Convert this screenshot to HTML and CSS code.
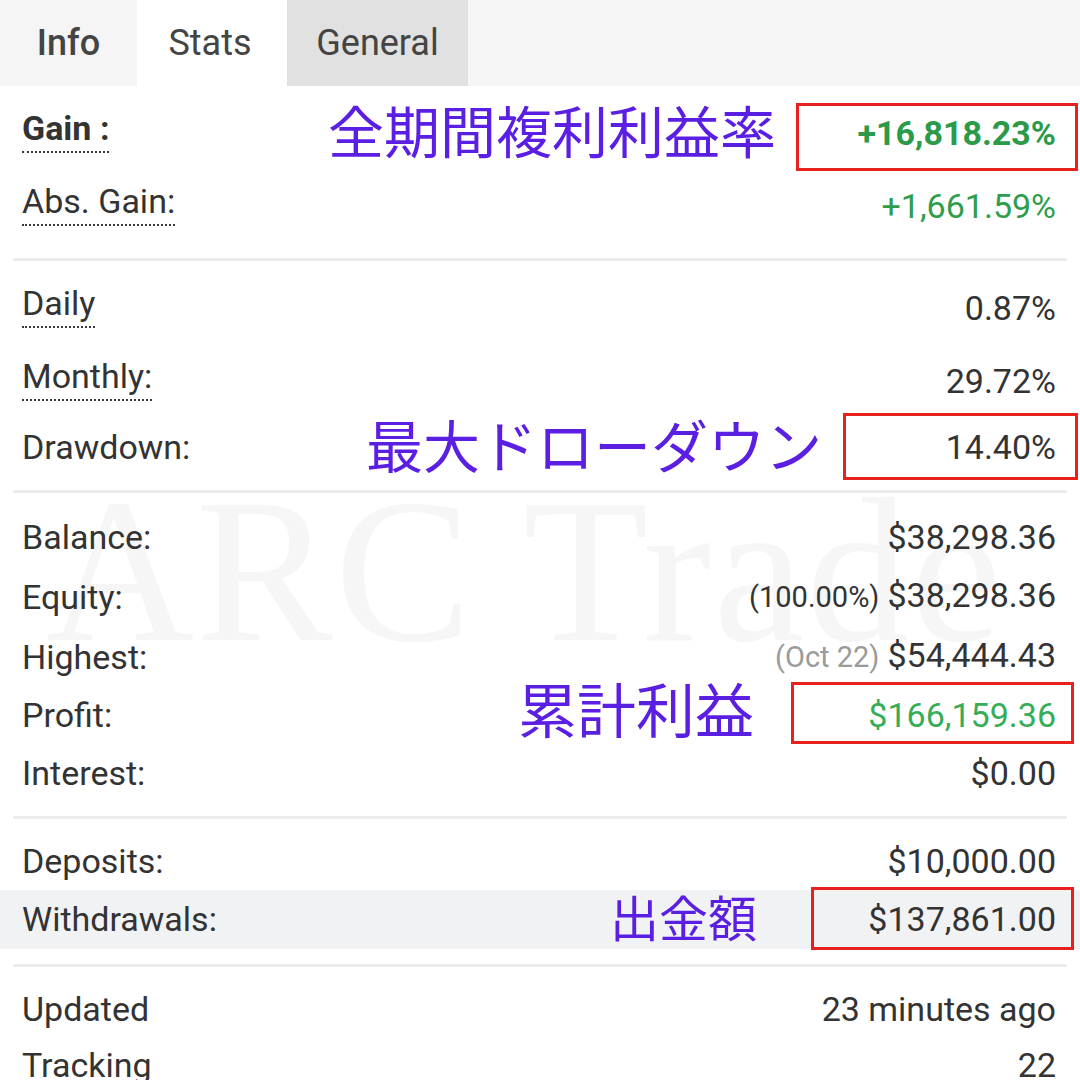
FILE: index.html
```html
<!DOCTYPE html>
<html lang="ja">
<head>
<meta charset="utf-8">
<title>Stats</title>
<link rel="stylesheet" href="styles.css">
</head>
<body>
<div class="page">
  <div class="watermark">ARC Trade</div>

  <nav class="tabs">
    <div class="tab tab-info">Info</div>
    <div class="tab tab-stats">Stats</div>
    <div class="tab tab-general">General</div>
    <div class="tab-fill"></div>
  </nav>

  <div class="sheet">
    <section class="group g1">
      <div class="row row-tall">
        <span class="label dotted bold">Gain :</span>
        <span class="value green-strong bold">+16,818.23%</span>
      </div>
      <div class="row row-tall">
        <span class="label dotted">Abs. Gain:</span>
        <span class="value green">+1,661.59%</span>
      </div>
    </section>
    <div class="sep"></div>

    <section class="group g2">
      <div class="row row-tall">
        <span class="label dotted">Daily</span>
        <span class="value">0.87%</span>
      </div>
      <div class="row row-tall">
        <span class="label dotted">Monthly:</span>
        <span class="value">29.72%</span>
      </div>
      <div class="row row-tall">
        <span class="label">Drawdown:</span>
        <span class="value">14.40%</span>
      </div>
    </section>
    <div class="sep"></div>

    <section class="group g3">
      <div class="row row-mid">
        <span class="label">Balance:</span>
        <span class="value">$38,298.36</span>
      </div>
      <div class="row row-mid">
        <span class="label">Equity:</span>
        <span class="value"><span class="sub">(100.00%)</span>$38,298.36</span>
      </div>
      <div class="row row-mid">
        <span class="label">Highest:</span>
        <span class="value"><span class="sub muted">(Oct 22)</span>$54,444.43</span>
      </div>
      <div class="row row-mid">
        <span class="label">Profit:</span>
        <span class="value green-light">$166,159.36</span>
      </div>
      <div class="row row-mid">
        <span class="label">Interest:</span>
        <span class="value">$0.00</span>
      </div>
    </section>
    <div class="sep"></div>

    <section class="group g4">
      <div class="row row-short">
        <span class="label">Deposits:</span>
        <span class="value">$10,000.00</span>
      </div>
      <div class="row row-short row-hl">
        <span class="label">Withdrawals:</span>
        <span class="value">$137,861.00</span>
      </div>
    </section>
    <div class="sep"></div>

    <section class="group g5">
      <div class="row row-tiny">
        <span class="label">Updated</span>
        <span class="value">23 minutes ago</span>
      </div>
      <div class="row row-tiny">
        <span class="label">Tracking</span>
        <span class="value">22</span>
      </div>
    </section>
  </div>

  <div class="note note-gain">全期間複利利益率</div>
  <div class="box box-gain"></div>

  <div class="note note-dd">最大ドローダウン</div>
  <div class="box box-dd"></div>

  <div class="note note-profit">累計利益</div>
  <div class="box box-profit"></div>

  <div class="note note-wd">出金額</div>
  <div class="box box-wd"></div>
</div>
</body>
</html>
```

FILE: styles.css
```css
html, body {
  margin: 0;
  padding: 0;
  background: #ffffff;
}

.page {
  position: relative;
  width: 1080px;
  height: 1080px;
  overflow: hidden;
  background: #ffffff;
  font-family: Roboto, "Liberation Sans", sans-serif;
  color: #333333;
}

/* watermark */
.watermark {
  position: absolute;
  left: 46px;
  top: 468px;
  font-family: "Liberation Serif", serif;
  font-size: 205px;
  line-height: 1;
  color: #f6f6f6;
  white-space: nowrap;
  letter-spacing: 2px;
}

/* tabs */
.tabs {
  position: relative;
  display: flex;
  height: 86px;
  background: #f5f5f5;
}

.tab {
  display: flex;
  align-items: center;
  justify-content: center;
  font-size: 36px;
  color: #444444;
  height: 86px;
}

.tab-info {
  width: 137px;
  font-weight: 500;
}

.tab-stats {
  width: 146px;
  padding-right: 4px;
  background: #ffffff;
}

.tab-general {
  width: 181px;
  background: #e1e1e1;
}

.tab-fill {
  flex: 1;
}

/* sheet */
.sheet {
  position: relative;
  display: flex;
  flex-direction: column;
}

.group {
  display: flex;
  flex-direction: column;
}

.g1 { padding: 8px 0 18px; }
.g2 { padding: 8px 0 9px; }
.g3 { padding: 15px 0 14px; }
.g4 { padding: 13px 0 15px; }
.g5 { padding: 14px 0 0; }

.sep {
  height: 3px;
  margin: 0 13px;
  background: #ececec;
}

.row {
  display: flex;
  justify-content: space-between;
  align-items: flex-end;
  padding-left: 22px;
  padding-right: 24px;
  font-size: 34px;
  line-height: 40px;
}

.row-tall { padding-top: 14px; padding-bottom: 14px; }
.row-tall:nth-child(3) { padding-top: 12px; }
.row-mid { padding-top: 9px; padding-bottom: 9px; }
.row-short { padding-top: 9px; padding-bottom: 9px; }
.row-hl { padding-bottom: 10px; }
.row-tiny { padding-top: 8px; padding-bottom: 8px; }

.row-hl {
  background: #f1f2f4;
}

.label {
  display: inline-block;
  white-space: nowrap;
}

.dotted {
  padding-bottom: 3px;
  border-bottom: 2px dotted #3a3a3a;
}

.bold {
  font-weight: 700;
}

.value {
  white-space: nowrap;
}

.sub {
  font-size: 29px;
  margin-right: 8px;
}

.muted {
  color: #9a9a9a;
}

.green-strong { color: #2b9a49; }
.green { color: #2e9e4c; }
.green-light { color: #36ad58; }

/* annotations */
.note {
  position: absolute;
  font-family: "Noto Sans CJK JP", "Noto Sans CJK SC", sans-serif;
  line-height: 1;
  color: #5a1fe3;
  white-space: nowrap;
}

.note-gain {
  left: 328px;
  top: 101px;
  font-size: 56px;
}

.note-dd {
  left: 366px;
  top: 415px;
  font-size: 57px;
}

.note-profit {
  left: 518px;
  top: 678px;
  font-size: 59px;
}

.note-wd {
  left: 610px;
  top: 891px;
  font-size: 49px;
}

.box {
  position: absolute;
  border: 3px solid #e8201e;
  box-sizing: border-box;
}

.box-gain {
  left: 796px;
  top: 103px;
  width: 282px;
  height: 68px;
}

.box-dd {
  left: 843px;
  top: 413px;
  width: 235px;
  height: 67px;
}

.box-profit {
  left: 791px;
  top: 682px;
  width: 283px;
  height: 62px;
}

.box-wd {
  left: 811px;
  top: 887px;
  width: 263px;
  height: 63px;
}
```
